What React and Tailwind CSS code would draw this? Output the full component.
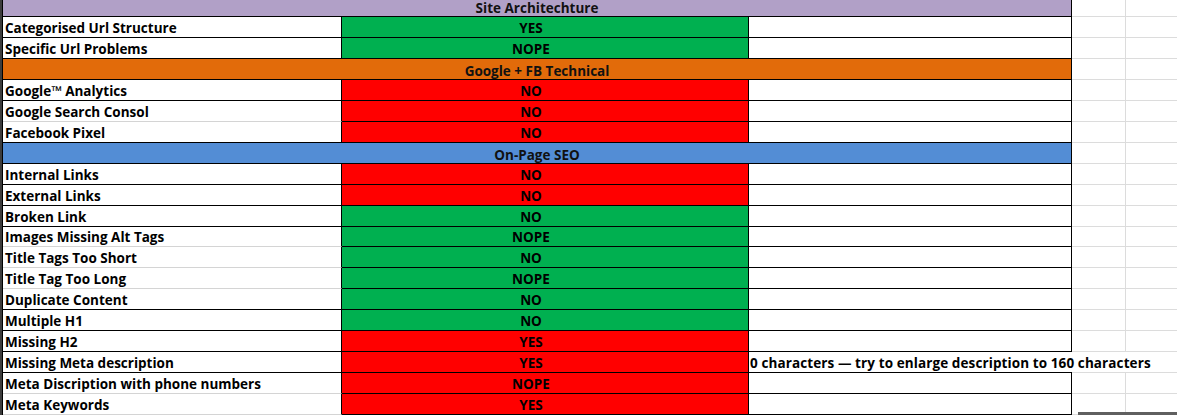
import React from 'react';

const font = { fontFamily: '"Open Sans", Lato, sans-serif' };

const rows = [
    { header: 'Site Architechture', color: 'bg-[#b1a0c7]', first: true },
    { label: 'Categorised Url Structure', value: 'YES', ok: true },
    { label: 'Specific Url Problems', value: 'NOPE', ok: true },
    { header: 'Google + FB Technical', color: 'bg-[#e26b0a]' },
    { label: 'Google™ Analytics', value: 'NO' },
    { label: 'Google Search Consol', value: 'NO', soft: true },
    { label: 'Facebook Pixel', value: 'NO' },
    { header: 'On-Page SEO', color: 'bg-[#538dd5]' },
    { label: 'Internal Links', value: 'NO' },
    { label: 'External Links', value: 'NO' },
    { label: 'Broken Link', value: 'NO', ok: true },
    { label: 'Images Missing Alt Tags', value: 'NOPE', ok: true, soft: true },
    { label: 'Title Tags Too Short', value: 'NO', ok: true, soft: true },
    { label: 'Title Tag Too Long', value: 'NOPE', ok: true, soft: true },
    { label: 'Duplicate Content', value: 'NO', ok: true },
    { label: 'Multiple H1', value: 'NO', ok: true },
    { label: 'Missing H2', value: 'YES' },
    { label: 'Missing Meta description', value: 'YES', note: '0 characters — try to enlarge description to 160 characters' },
    { label: 'Meta Discription with phone numbers', value: 'NOPE', soft: true },
    { label: 'Meta Keywords', value: 'YES', soft: true },
];

const HeaderRow = ({ row }) => (
    <div className={`flex ${row.first ? 'h-[17px]' : 'h-[21px]'}`}>
        <div className={`w-[1069px] shrink-0 flex items-end justify-center border-b border-r border-black ${row.color}`}>
            <span className="text-[13.5px] font-bold leading-[16px] text-[#111]">{row.header}</span>
        </div>
        <div className="w-[54px] shrink-0 border-b border-r border-[#dcdcdc]" />
        <div className="flex-1 border-b border-[#dcdcdc]" />
    </div>
);

const DataRow = ({ row }) => (
    <div className="flex h-[21px]">
        <div
            className={`w-[339px] shrink-0 flex items-end pl-[2px] pb-[1px] border-b border-r border-r-black ${
                row.soft ? 'border-b-[#d4d4d4]' : 'border-b-black'
            }`}
        >
            <span className="text-[13.5px] font-bold leading-[16px] whitespace-nowrap">{row.label}</span>
        </div>
        <div
            className={`w-[407px] shrink-0 flex items-end justify-center pr-[28px] pb-[1px] border-b border-r border-black ${
                row.ok ? 'bg-[#00b050]' : 'bg-[#ff0000]'
            }`}
        >
            <span className="text-[13.5px] font-bold leading-[16px]">{row.value}</span>
        </div>
        {row.note ? (
            <>
                <div className="w-[323px] shrink-0 flex items-end pl-[1px] pb-[1px] border-b border-black overflow-visible">
                    <span className="text-[13.5px] font-bold leading-[16px] whitespace-nowrap tracking-[0.1px]">{row.note}</span>
                </div>
                <div className="w-[54px] shrink-0 border-b border-[#dcdcdc]" />
                <div className="flex-1 border-b border-[#dcdcdc]" />
            </>
        ) : (
            <>
                <div className="w-[323px] shrink-0 border-b border-r border-black" />
                <div className="w-[54px] shrink-0 border-b border-r border-[#dcdcdc]" />
                <div className="flex-1 border-b border-[#dcdcdc]" />
            </>
        )}
    </div>
);

const App = () => {
    return (
        <div className="w-[1177px] h-[415px] bg-white overflow-hidden relative flex" style={font}>
            <div className="w-[2px] shrink-0 bg-[#3c3c3c]" />
            <div className="flex-1 flex flex-col border-l border-black">
                {rows.map((row, i) =>
                    row.header ? <HeaderRow key={i} row={row} /> : <DataRow key={i} row={row} />
                )}
            </div>
            <div className="absolute right-0 bottom-0 w-[99px] h-[3px] bg-[#5f5f5f]" />
        </div>
    );
};

export default App;
